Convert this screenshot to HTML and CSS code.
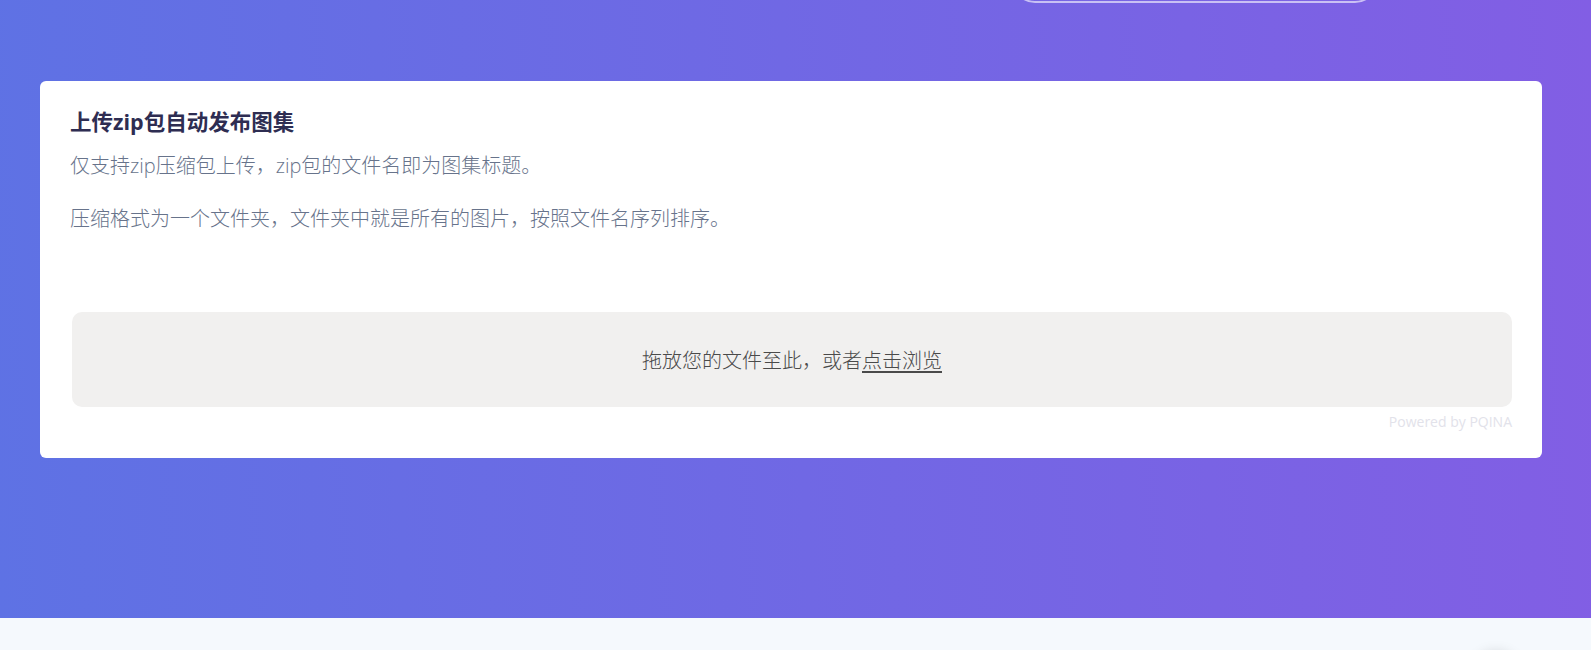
FILE: index.html
```html
<!DOCTYPE html>
<html lang="zh-CN">
<head>
    <meta charset="UTF-8">
    <meta name="viewport" content="width=device-width, initial-scale=1.0">
    <title>上传zip包自动发布图集</title>
    <link rel="stylesheet" href="styles.css">
</head>
<body>
    <section class="hero">
        <div class="topbar">
            <div class="search-pill"></div>
        </div>

        <div class="card">
            <h3 class="card-title">上传zip包自动发布图集</h3>
            <p class="card-text">仅支持zip压缩包上传，zip包的文件名即为图集标题。</p>
            <p class="card-text last">压缩格式为一个文件夹，文件夹中就是所有的图片，按照文件名序列排序。</p>

            <div class="dropzone">
                <span class="drop-label">拖放您的文件至此，或者<span class="browse">点击浏览</span></span>
            </div>
            <div class="credits">Powered by PQINA</div>
        </div>
    </section>

    <section class="page-bottom">
        <div class="float-btn"></div>
    </section>
</body>
</html>
```

FILE: styles.css
```css
* {
    margin: 0;
    padding: 0;
    box-sizing: border-box;
}

body {
    font-family: 'Open Sans', 'Noto Sans CJK SC', sans-serif;
    background: #f5f9fd;
    overflow: hidden;
}

.hero {
    background: linear-gradient(87deg, #5e72e4 0, #825ee4 100%);
    padding-bottom: 160px;
}

.topbar {
    display: flex;
    justify-content: flex-end;
    padding-right: 213px;
}

.search-pill {
    width: 366px;
    height: 46px;
    margin-top: -43px;
    border: 2px solid rgba(255, 255, 255, 0.6);
    border-radius: 30px;
}

.card {
    background: white;
    border-radius: 6px;
    margin: 78px 49px 0 40px;
    padding: 26px 30px 27px 30px;
}

.card-title {
    font-size: 21.5px;
    line-height: 30px;
    font-weight: 700;
    color: #2e2d52;
    margin-bottom: 14px;
}

.card-text {
    font-size: 20px;
    line-height: 30px;
    font-weight: 300;
    color: #67738b;
    margin-bottom: 23px;
}

.card-text.last {
    margin-bottom: 78px;
}

.dropzone {
    height: 95px;
    margin-left: 2px;
    background: #f1f0ef;
    border-radius: 10px;
    display: flex;
    justify-content: center;
    align-items: center;
}

.drop-label {
    font-size: 20px;
    font-weight: 300;
    color: #4a4a4a;
}

.browse {
    text-decoration: underline;
    text-underline-offset: 3px;
}

.credits {
    margin-top: 6px;
    text-align: right;
    font-size: 14px;
    line-height: 18px;
    color: #e2e2ea;
}

.page-bottom {
    height: 200px;
    display: flex;
    justify-content: flex-end;
    padding-right: 73px;
}

.float-btn {
    width: 44px;
    height: 44px;
    margin-top: 35px;
    border-radius: 50%;
    background: #f5f9fd;
    box-shadow: 0 0 14px rgba(0, 0, 0, 0.18);
}
```
